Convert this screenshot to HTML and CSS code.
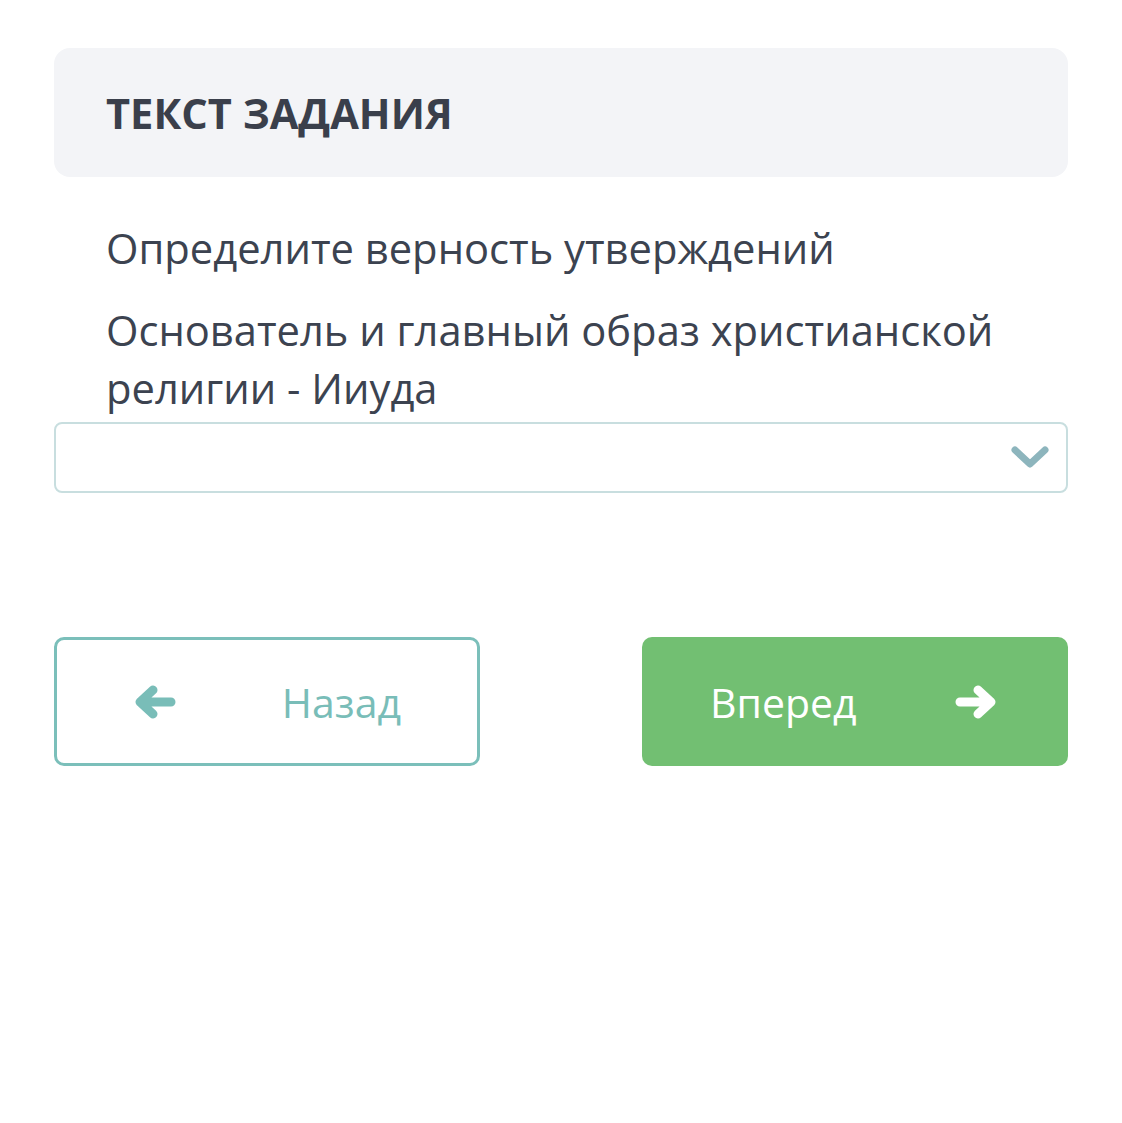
FILE: index.html
```html
<!DOCTYPE html>
<html lang="ru">
  <head>
    <meta charset="UTF-8" />
    <meta name="viewport" content="width=device-width, initial-scale=1.0" />
    <title>Задание</title>
    <link rel="stylesheet" href="styles.css">
  </head>
  <body>
    <div class="task">
      <div class="task-head">
        <h2>Текст задания</h2>
      </div>
      <div class="task-body">
        <p class="lead">Определите верность утверждений</p>
        <p class="question">Основатель и главный образ христианской религии - Ииуда</p>
      </div>
      <div class="select">
        <svg class="chevron" viewBox="0 0 40 26" width="40" height="26">
          <path d="M5 5 L20 19 L35 5" fill="none" stroke="#8db5bd" stroke-width="7" stroke-linecap="round" stroke-linejoin="round" />
        </svg>
      </div>
      <div class="nav">
        <button type="button" class="btn btn-back">
          <svg class="arrow" viewBox="0 0 44 36" width="44" height="36">
            <path d="M38 18 H8 M20 6 L7 18 L20 30" fill="none" stroke="currentColor" stroke-width="9" stroke-linecap="round" stroke-linejoin="round" />
          </svg>
          <span>Назад</span>
        </button>
        <button type="button" class="btn btn-next">
          <span>Вперед</span>
          <svg class="arrow" viewBox="0 0 44 36" width="44" height="36">
            <path d="M6 18 H36 M24 6 L37 18 L24 30" fill="none" stroke="currentColor" stroke-width="9" stroke-linecap="round" stroke-linejoin="round" />
          </svg>
        </button>
      </div>
    </div>
  </body>
</html>
```

FILE: styles.css
```css
body {
  margin: 0;
  background: #fff;
  font-family: "Open Sans", "Noto Sans", sans-serif;
  color: #3c4350;
}
.task {
  padding: 48px 54px;
}
.task-head {
  background-color: #f3f4f7;
  border-radius: 16px;
  height: 129px;
  display: flex;
  align-items: center;
  padding: 0 52px;
}
.task-head h2 {
  margin: 0;
  font-size: 41.6px;
  font-weight: 700;
  text-transform: uppercase;
  color: #3a3f4b;
}
.task-body {
  padding: 42px 52px 0;
}
.task-body p {
  margin: 0;
  font-size: 41.7px;
  line-height: 58px;
}
.task-body .lead {
  margin-bottom: 24px;
}
.select {
  height: 67px;
  border: 2px solid #c8dedf;
  border-radius: 8px;
  display: flex;
  align-items: center;
  justify-content: flex-end;
  padding-right: 16px;
  margin-top: 5px;
}
.nav {
  display: flex;
  justify-content: space-between;
  margin-top: 144px;
}
.btn {
  width: 426px;
  height: 129px;
  border-radius: 10px;
  font-family: inherit;
  font-size: 41px;
  display: flex;
  align-items: center;
  cursor: pointer;
}
.btn-back {
  background: #fff;
  border: 3px solid #7bbfba;
  color: #79bdb8;
  padding: 0 76px 0 76px;
  justify-content: space-between;
}
.btn-next {
  background: #72bf72;
  border: none;
  color: #fff;
  padding: 0 70px 0 68px;
  justify-content: space-between;
}
```
